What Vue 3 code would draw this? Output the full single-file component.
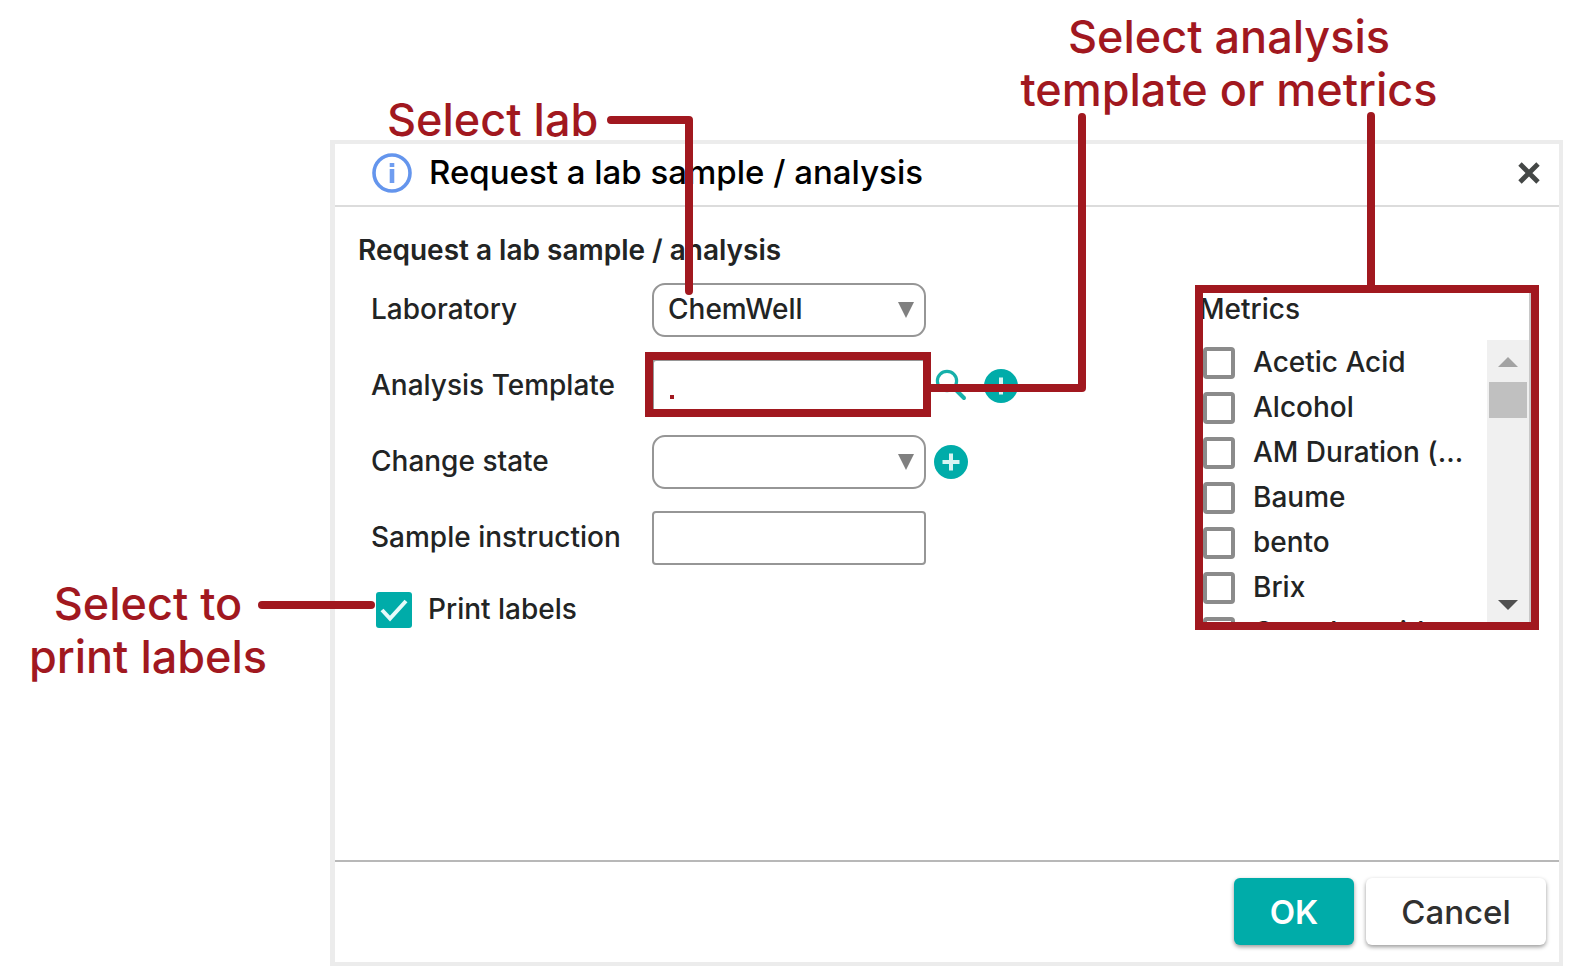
<script setup>
import { ref } from 'vue'

const laboratory = ref('ChemWell')
const template = ref('')
const state = ref('')
const instruction = ref('')
const printLabels = ref(true)
const metrics = ref([
  { id: 'acetic', name: 'Acetic Acid', on: false },
  { id: 'alcohol', name: 'Alcohol', on: false },
  { id: 'duration', name: 'AM Duration (...', on: false },
  { id: 'baume', name: 'Baume', on: false },
  { id: 'bento', name: 'bento', on: false },
  { id: 'brix', name: 'Brix', on: false },
  { id: 'cane', name: 'Cane burn id', on: false },
])
</script>

<template>
  <div class="page">
    <main class="dialog" role="dialog" aria-labelledby="dialog-title">
      <header class="dialog-head">
        <svg class="info" viewBox="0 0 40 40" aria-hidden="true">
          <circle cx="20" cy="20" r="18" fill="none" stroke="#6495ed" stroke-width="3.6" />
          <path d="M20 16V30" stroke="#6f9df0" stroke-width="4.6" />
          <path d="M20 10V14" stroke="#6f9df0" stroke-width="4.6" />
        </svg>
        <h1 id="dialog-title">Request a lab sample / analysis</h1>
        <button class="close" type="button" aria-label="Close">
          <svg viewBox="0 0 24 24"><path d="M3 3L21 21M21 3L3 21" stroke="#444746" stroke-width="4.8" /></svg>
        </button>
      </header>

      <form class="dialog-body" @submit.prevent>
        <section class="fields">
          <h2>Request a lab sample / analysis</h2>
          <div class="grid">
            <label for="lab">Laboratory</label>
            <div class="control">
              <div class="pick">
                <select id="lab" v-model="laboratory"><option>ChemWell</option></select>
                <svg viewBox="0 0 16 16" aria-hidden="true"><path d="M0 0H16L8 16Z" fill="#808080" /></svg>
              </div>
            </div>

            <label for="template">Analysis Template</label>
            <div class="control">
              <input id="template" v-model="template" class="text" type="text" />
              <button class="icon" type="button" aria-label="Search templates">
                <svg viewBox="0 0 34 34"><g fill="none" stroke="#16b0aa" stroke-width="3.2"><circle cx="13" cy="12" r="9.6" /><path d="M21 20L30 29" stroke-linecap="round" stroke-width="4" /></g></svg>
              </button>
              <button class="icon" type="button" aria-label="Add template">
                <svg viewBox="0 0 34 34"><circle cx="17" cy="17" r="17" fill="#00aca9" /><path d="M17 8.500V25.500M8.500 17H25.500" stroke="#d8f5f3" stroke-width="4" /></svg>
              </button>
            </div>

            <label for="state">Change state</label>
            <div class="control">
              <div class="pick">
                <select id="state" v-model="state"><option value=""></option></select>
                <svg viewBox="0 0 16 16" aria-hidden="true"><path d="M0 0H16L8 16Z" fill="#808080" /></svg>
              </div>
              <button class="icon" type="button" aria-label="Add state">
                <svg viewBox="0 0 34 34"><circle cx="17" cy="17" r="17" fill="#00aca9" /><path d="M17 8.500V25.500M8.500 17H25.500" stroke="#d8f5f3" stroke-width="4" /></svg>
              </button>
            </div>

            <label for="instruction">Sample instruction</label>
            <div class="control">
              <input id="instruction" v-model="instruction" class="text" type="text" />
            </div>
          </div>
          <label class="print">
            <input v-model="printLabels" type="checkbox" />
            <svg viewBox="0 0 36 36" aria-hidden="true"><path d="M6 18L14 26.500L30 9" fill="none" stroke="#e6fbfa" stroke-width="4" /></svg>
            <span>Print labels</span>
          </label>
        </section>

        <fieldset class="metrics">
          <legend>Metrics</legend>
          <div class="list">
            <div class="items">
              <label v-for="m in metrics" :key="m.id">
                <input v-model="m.on" type="checkbox" />
                <span>{{ m.name }}</span>
              </label>
            </div>
            <div class="scroll" aria-hidden="true">
              <svg viewBox="0 0 20 10"><path d="M0 10L10 0L20 10Z" fill="#a3a3a3" /></svg>
              <i></i>
              <svg class="down" viewBox="0 0 20 10"><path d="M0 0H20L10 10Z" fill="#505050" /></svg>
            </div>
          </div>
        </fieldset>
      </form>

      <footer class="dialog-foot">
        <button class="btn ok" type="button">OK</button>
        <button class="btn" type="button">Cancel</button>
      </footer>
    </main>

    <div class="notes">
      <p class="note note-lab">Select lab</p>
      <p class="note note-metrics">Select analysis<br />template or metrics</p>
      <p class="note note-print">Select to<br />print labels</p>
      <svg class="lines" width="1572" height="700" viewBox="0 0 1572 700" aria-hidden="true">
        <g fill="none" stroke="#a1181f" stroke-width="8" stroke-linecap="round" stroke-linejoin="round">
          <path d="M611 120H689V291" />
          <path d="M1082 117V388H931" />
          <path d="M1371 116V286" />
          <path d="M262 605H371" />
        </g>
        <rect x="649" y="356" width="278" height="57" fill="none" stroke="#a1181f" stroke-width="8" />
        <rect x="1199" y="289" width="336" height="337" fill="none" stroke="#a1181f" stroke-width="8" />
        <rect x="670" y="395" width="4" height="4" fill="#a1181f" />
      </svg>
    </div>
  </div>
</template>

<style>
body {
  margin: 0;
  background: #fff;
}
</style>

<style scoped>
* {
  box-sizing: border-box;
}
.page {
  position: relative;
  display: flex;
  min-height: 100vh;
  padding: 140px 9px 9px 330px;
  font-family: Inter, "Open Sans", sans-serif;
  font-size: 28px;
  font-weight: 500;
  color: #222424;
}
button,
input,
select {
  margin: 0;
  font: inherit;
  color: inherit;
}
.dialog {
  flex: 1;
  display: flex;
  flex-direction: column;
  min-width: 0;
  border: 4px solid #ececec;
  border-left-width: 5px;
  background: #fff;
}
.dialog-head {
  display: flex;
  align-items: center;
  height: 63px;
  padding: 0 16px 4px 37px;
  border-bottom: 2px solid #dcdcdc;
}
.info {
  width: 40px;
  height: 40px;
  margin-right: 17px;
}
h1 {
  flex: 1;
  margin: 0;
  padding-bottom: 2px;
  font-size: 33px;
  font-weight: 500;
  line-height: 40px;
  color: #000;
}
.close {
  width: 28px;
  height: 28px;
  padding: 2px;
  border: 0;
  background: none;
}
.close svg,
.icon svg {
  display: block;
  width: 100%;
  height: 100%;
}
.dialog-body {
  flex: 1;
  display: flex;
  align-items: flex-start;
  gap: 172px;
}
.fields {
  width: 688px;
  padding: 23px 0 0 23px;
}
h2 {
  margin: 0 0 13px;
  font-size: 28px;
  font-weight: 600;
  line-height: 40px;
}
.grid {
  display: grid;
  grid-template-columns: 281px 1fr;
  row-gap: 22px;
  align-items: center;
  margin-left: 13px;
}
.grid label {
  padding-bottom: 2px;
}
.control {
  display: flex;
  align-items: center;
  gap: 8px;
  height: 54px;
}
.control .icon + .icon {
  margin-left: 8px;
}
.pick {
  position: relative;
  width: 274px;
}
.pick svg {
  position: absolute;
  top: 19px;
  right: 12px;
  width: 16px;
  height: 16px;
  pointer-events: none;
}
select,
.text {
  display: block;
  width: 274px;
  height: 54px;
  padding: 0 14px 2px;
  border: 2px solid #969696;
  background: #fff;
  outline: 0;
}
select {
  border-radius: 13px;
  appearance: none;
}
.text {
  border-radius: 4px;
}
.icon {
  width: 34px;
  height: 34px;
  padding: 0;
  border: 0;
  background: none;
}
.print {
  position: relative;
  display: flex;
  align-items: center;
  gap: 16px;
  margin: 27px 0 0 18px;
}
.print input {
  width: 36px;
  height: 36px;
  border-radius: 3px;
  background: #00aca9;
  appearance: none;
}
.print svg {
  position: absolute;
  left: 0;
  width: 36px;
  height: 36px;
}
.print span {
  padding-bottom: 2px;
}
.metrics {
  width: 336px;
  height: 341px;
  margin: 80px 0 0;
  padding: 0;
  border: 0;
  border-left: 2px solid #c8c8c8;
  border-right: 2px solid #c8c8c8;
  overflow: hidden;
}
legend {
  float: left;
  width: 100%;
  padding: 0 0 9px 2px;
  line-height: 44px;
}
.list {
  clear: both;
  display: flex;
  height: 288px;
}
.items {
  flex: 1;
  padding-left: 6px;
  overflow: hidden;
}
.items label {
  display: flex;
  align-items: center;
  gap: 18px;
  height: 45px;
  line-height: 45px;
  white-space: nowrap;
}
.items input {
  width: 32px;
  height: 32px;
  border: 4px solid #8b8b8b;
  border-radius: 4px;
  background: #fff;
  appearance: none;
}
.scroll {
  display: flex;
  flex-direction: column;
  align-items: center;
  width: 42px;
  padding: 17px 2px 18px;
  background: #f0f0f0;
}
.scroll svg {
  width: 20px;
  height: 10px;
}
.scroll i {
  width: 38px;
  height: 36px;
  margin-top: 15px;
  background: #c0c0c0;
}
.scroll .down {
  margin-top: auto;
}
.dialog-foot {
  display: flex;
  justify-content: flex-end;
  gap: 12px;
  padding: 16px 13px 17px;
  border-top: 2px solid #b8b8b8;
}
.btn {
  width: 180px;
  height: 67px;
  border: 0;
  border-radius: 6px;
  background: #fff;
  box-shadow: 0 2px 4px #00000066;
  font-size: 33px;
  color: #303030;
}
.ok {
  width: 120px;
  background: #00aca9;
  font-weight: 600;
  color: #fff;
}
.notes {
  position: absolute;
  top: 0;
  left: 0;
  pointer-events: none;
}
.lines {
  display: block;
}
.note {
  position: absolute;
  margin: 0;
  font-size: 45px;
  line-height: 53px;
  text-align: center;
  white-space: nowrap;
  color: #a1181f;
}
.note-lab {
  top: 93px;
  left: 387px;
}
.note-metrics {
  top: 10px;
  left: 1009px;
  width: 440px;
}
.note-print {
  top: 577px;
  left: 18px;
  width: 260px;
}
</style>
